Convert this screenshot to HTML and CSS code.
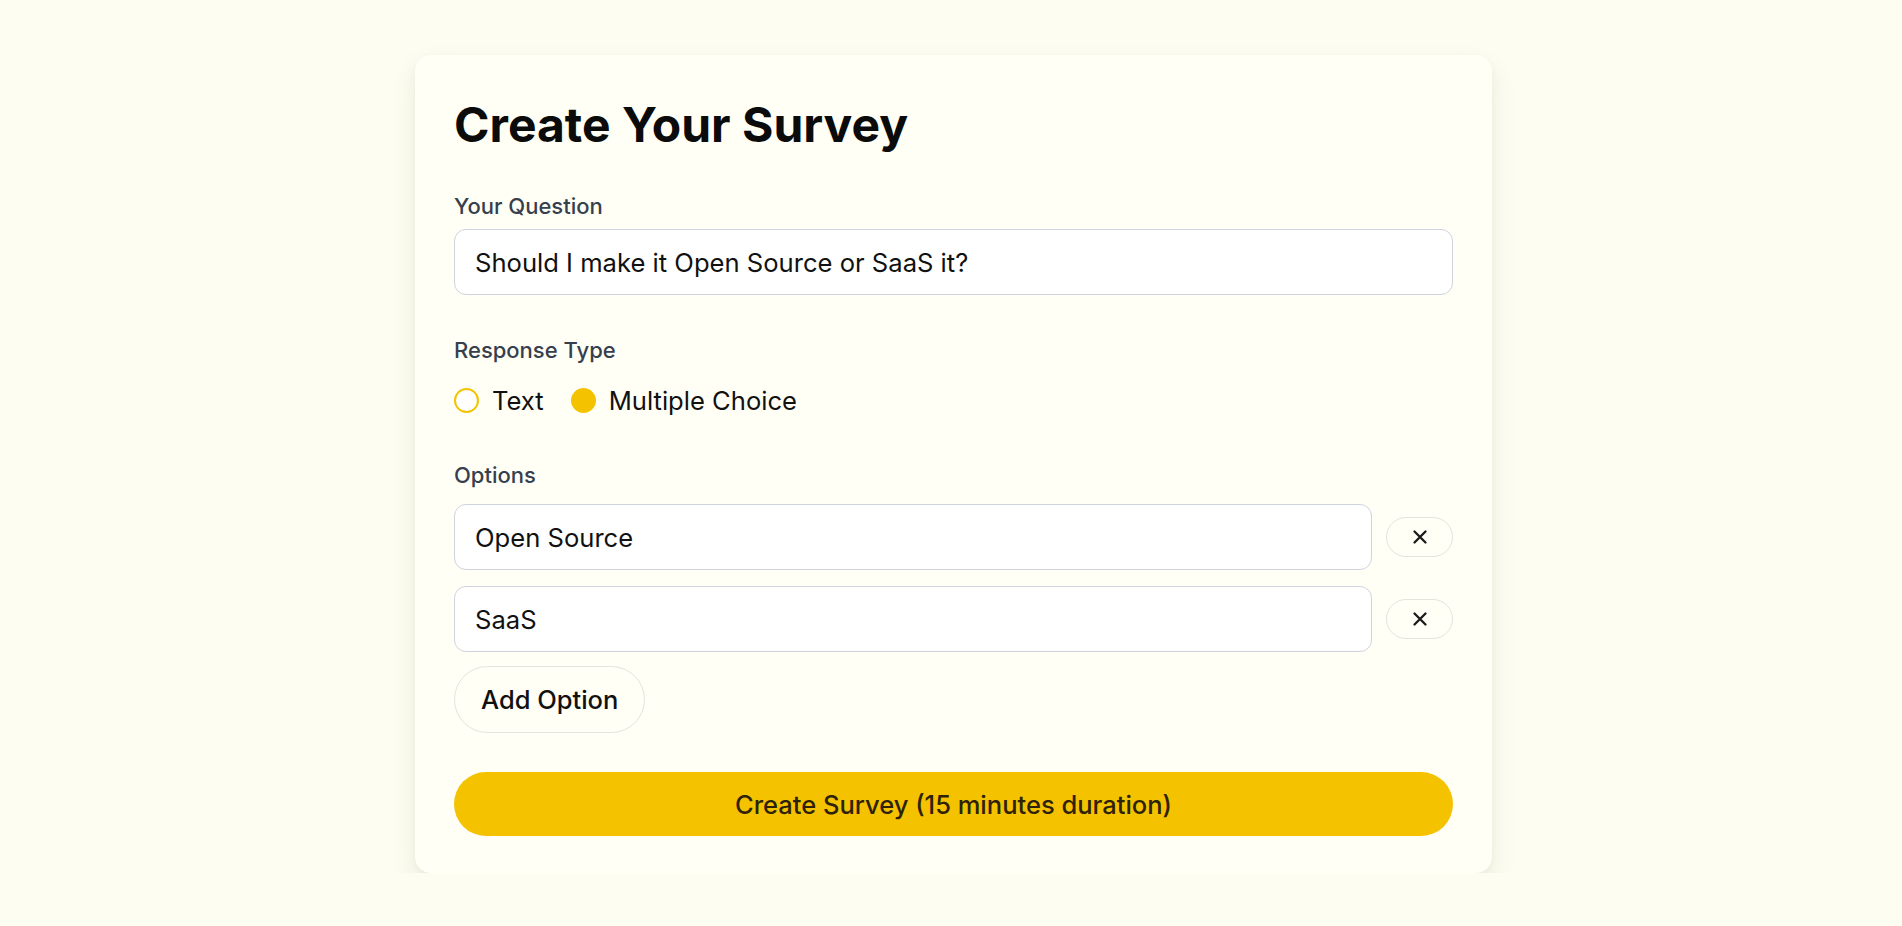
FILE: index.html
```html
<!DOCTYPE html>
<html lang="en">
<head>
    <meta charset="UTF-8">
    <meta name="viewport" content="width=device-width, initial-scale=1.0">
    <title>Create Your Survey</title>
    <link rel="stylesheet" href="styles.css">
</head>
<body>
    <div class="card">
        <h1 class="title">Create Your Survey</h1>

        <label class="label label-question" for="question">Your Question</label>
        <input class="field" id="question" type="text" value="Should I make it Open Source or SaaS it?">

        <div class="label label-type">Response Type</div>
        <div class="radios">
            <label class="radio">
                <span class="dot"></span>
                <span>Text</span>
            </label>
            <label class="radio">
                <span class="dot checked"></span>
                <span>Multiple Choice</span>
            </label>
        </div>

        <div class="label label-options">Options</div>
        <div class="optionList">
            <div class="optionRow">
                <input class="field" type="text" value="Open Source">
                <button class="removeBtn" type="button" aria-label="Remove">
                    <svg width="18" height="18" viewBox="0 0 18 18"><path d="M3.5 3.5 L14.5 14.5 M14.5 3.5 L3.5 14.5" stroke="#1a1a1a" stroke-width="2.3" stroke-linecap="round"/></svg>
                </button>
            </div>
            <div class="optionRow">
                <input class="field" type="text" value="SaaS">
                <button class="removeBtn" type="button" aria-label="Remove">
                    <svg width="18" height="18" viewBox="0 0 18 18"><path d="M3.5 3.5 L14.5 14.5 M14.5 3.5 L3.5 14.5" stroke="#1a1a1a" stroke-width="2.3" stroke-linecap="round"/></svg>
                </button>
            </div>
        </div>
        <button class="addBtn" type="button">Add Option</button>

        <button class="createBtn" type="button">Create Survey (15 minutes duration)</button>
    </div>
</body>
</html>
```

FILE: styles.css
```css
body {
    margin: 0;
    padding: 0 0 0 5px;
    background: #fdfdf1;
    font-family: Inter, "Noto Sans", sans-serif;
    color: #111;
}
.card {
    width: 1077px;
    box-sizing: border-box;
    margin: 55px auto 0;
    padding: 40px 39px 37px;
    background: #fffff6;
    border-radius: 16px;
    box-shadow: 0 12px 28px rgba(40, 40, 20, 0.08), 0 3px 8px rgba(40, 40, 20, 0.04);
    display: flex;
    flex-direction: column;
}
.title {
    margin: 3px 0 41px;
    font-size: 48px;
    line-height: 53px;
    font-weight: 700;
    color: #0b0b0b;
}
.label {
    display: block;
    font-size: 22px;
    line-height: 28px;
    font-weight: 500;
    color: #373f4e;
}
.label-question { margin-bottom: 9px; }
.label-type { margin-top: 41px; margin-bottom: 20px; }
.label-options { margin-top: 45px; margin-bottom: 15px; }

.field {
    display: block;
    width: 100%;
    box-sizing: border-box;
    height: 66px;
    padding: 0 20px;
    border: 1.5px solid #cfd3de;
    border-radius: 12px;
    background: #fff;
    font-family: inherit;
    font-size: 25.6px;
    color: #111;
    outline: none;
}

.radios {
    display: flex;
    align-items: center;
    gap: 27px;
    height: 32px;
}
.radio {
    display: flex;
    align-items: center;
    gap: 13px;
    font-size: 25.6px;
    color: #111;
}
.dot {
    width: 25px;
    height: 25px;
    box-sizing: border-box;
    border-radius: 50%;
    border: 2px solid #f5c200;
    background: #fff;
}
.dot.checked {
    background: #f5c200;
}

.optionList {
    display: flex;
    flex-direction: column;
    gap: 16px;
}
.optionRow {
    display: flex;
    align-items: center;
    gap: 14px;
}
.removeBtn {
    flex: none;
    width: 67px;
    height: 40px;
    border: 1.5px solid #e4e4de;
    border-radius: 20px;
    background: transparent;
    display: flex;
    align-items: center;
    justify-content: center;
    padding: 0;
}
.addBtn {
    align-self: flex-start;
    margin-top: 14px;
    height: 67px;
    padding: 0 26px;
    border: 1.5px solid #e4e4de;
    border-radius: 34px;
    background: transparent;
    font-family: inherit;
    font-size: 25.5px;
    font-weight: 550;
    color: #111;
}
.createBtn {
    margin-top: 39px;
    height: 64px;
    border: none;
    border-radius: 32px;
    background: #f5c200;
    font-family: inherit;
    font-size: 25.5px;
    font-weight: 500;
    color: #2e2308;
}
```
